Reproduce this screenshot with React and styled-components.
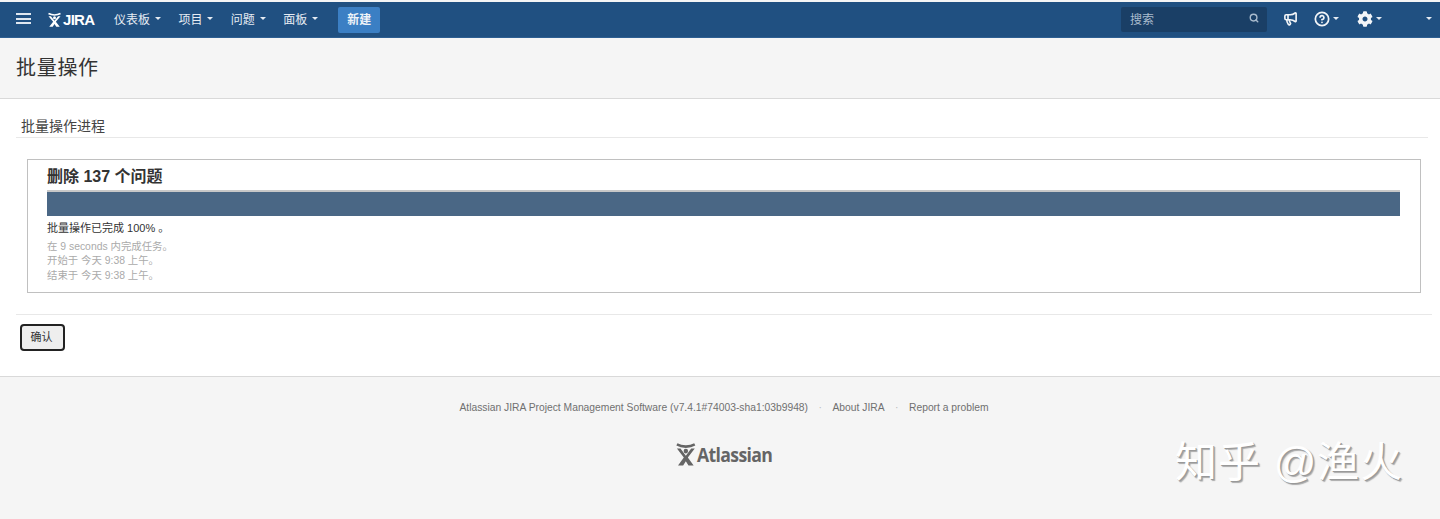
import React from "react";
import styled, { createGlobalStyle } from "styled-components";
import { Megaphone, CircleHelp, Search } from "lucide-react";
import { FaCog } from "react-icons/fa";

const Global = createGlobalStyle`
  html, body { margin: 0; padding: 0; background: #f5f5f5; }
  body { font-family: "Liberation Sans", "Noto Sans CJK SC", sans-serif; font-size: 14px; color: #333; }
`;
const Page = styled.div`position: relative; width: 1440px; height: 519px; overflow: hidden; padding-top: 2px; box-sizing: border-box; background: #f5f5f5;`;
const Nav = styled.header`height: 35px; background: #205081; border-bottom: 1px solid #2e5f92; display: flex; align-items: center; color: #f0f0f0;`;
const Burger = styled.span`width: 15px; height: 11px; margin: 0 0 2px 16px; display: flex; flex-direction: column; justify-content: space-between;
  i { display: block; height: 2px; background: #dfe7f0; }`;
const Logo = styled.span`display: flex; align-items: center; gap: 1px; margin: 0 2px 1px 16px; width: 46px; font-size: 15px; font-weight: 700; letter-spacing: -0.7px; color: #fff; svg { flex: none; }`;
const Menu = styled.nav`display: flex; margin-left: 19px; gap: 17.4px;`;
const MenuItem = styled.span`display: flex; align-items: center; font-size: 12px; padding-bottom: 2px; color: #e6ecf3; white-space: nowrap;`;
const Caret = styled.i`display: inline-block; margin-left: ${p => p.$ml ?? 5}px; width: 0; height: 0; border-left: 3px solid transparent; border-right: 3px solid transparent; border-top: 3px solid #e6ecf3;`;
const Create = styled.span`margin-left: 20px; width: 42px; height: 26px; padding-bottom: 2px; box-sizing: border-box; background: #3b7fc4; border-radius: 2px; color: #eef3f8; font-size: 12px; font-weight: 700; display: flex; align-items: center; justify-content: center;`;
const Right = styled.div`margin-left: auto; display: flex; align-items: center; height: 100%;`;
const SearchBox = styled.div`width: 146px; height: 25px; margin-bottom: 1px; background: #1a3f66; border-radius: 2px; display: flex; align-items: center; justify-content: space-between; padding: 0 8px 2px 9px; box-sizing: border-box; font-size: 12px; color: #a9bbcd;`;
const IconSlot = styled.span`display: flex; align-items: center; margin-left: ${p => p.$ml}px; margin-right: ${p => p.$mr || 0}px; padding-bottom: 2px; color: #f2f5f8;`;
const HeaderBand = styled.div`height: 60px; border-bottom: 1px solid #d9d9d9; display: flex; align-items: center; padding-left: 16px;`;
const PageTitle = styled.h1`margin: 0 0 4px; font-size: 20px; font-weight: 400; color: #333; letter-spacing: .7px;`;
const Main = styled.main`height: 278px; background: #fff; border-bottom: 1px solid #d9d9d9; padding: 0 8px 0 16px; box-sizing: border-box; display: flex; flex-direction: column;`;
const SectionTitle = styled.h2`margin: 18px 4px 0 0; padding: 0 0 1px 5px; height: 19px; font-size: 14px; line-height: 18px; font-weight: 400; color: #444; border-bottom: 1px solid #e8e8e8;`;
const ProgressBox = styled.section`margin: 21px 11px 0 11px; height: 134px; box-sizing: border-box; border: 1px solid #c0c0c0; padding: 6px 20px 0 19px;`;
const TaskTitle = styled.h3`margin: 0; font-size: 16px; line-height: 22px; height: 24px; font-weight: 700; color: #333;`;
const Bar = styled.div`background: #4a6785; border-top: 2px solid #c8c8c8; height: 24px;`;
const Status = styled.p`margin: 5px 0 5px; font-size: 11px; line-height: 14px; color: #333;`;
const Meta = styled.p`margin: 0; font-size: 10.4px; line-height: 14.4px; color: #aaa;`;
const Divider = styled.div`margin-top: 21px; border-top: 1px solid #e8e8e8;`;
const Confirm = styled.button`margin: 9px 0 0 4px; width: 45px; height: 27px; padding: 0 2px 4px 0; background: #eee; border: 2px solid #222; border-radius: 4px; font: 11px "Liberation Sans", "Noto Sans CJK SC", sans-serif; color: #333;`;
const Footer = styled.footer`display: flex; flex-direction: column; align-items: center; padding-top: 24px;`;
const FootLinks = styled.div`display: flex; font-size: 10.3px; line-height: 13px; color: #707070; margin-left: 8px; white-space: nowrap;`;
const Dot = styled.span`margin: 0 10.5px; color: #bbb;`;
const AtlLogo = styled.div`display: flex; align-items: flex-end; margin-top: 28px; margin-left: 7px; font-size: 19px; font-weight: 700; color: #656565; letter-spacing: -0.7px; line-height: 21px; font-family: "Open Sans", sans-serif; transform: scaleX(.93);`;
const Watermark = styled.div`position: absolute; left: 1175px; top: 438px; font-size: 42px; line-height: 50px; letter-spacing: 1px; color: #fff; text-shadow: 1px 1px 0 #999, 2px 2px 1px #aaa; white-space: nowrap;`;

const Mark = ({ color, size }) => (
  <svg width={size} height={size} viewBox="0 0 20 20" fill="none">
    <path d="M2 2c4.5 2.4 11.5 2.4 16 0" stroke={color} strokeWidth="2.2" />
    <circle cx="10" cy="7.6" r="2" fill={color} />
    <path d="M2 5.5l6.2 7.5L3 19.5h4.6L10 16l2.4 3.5H17L11.8 13 18 5.5h-3.2L10 11.5 5.2 5.5z" fill={color} />
  </svg>
);

export default function App() {
  return (
    <Page>
      <Global />
      <Nav>
        <Burger><i /><i /><i /></Burger>
        <Logo><Mark color="#fff" size={15} />JIRA</Logo>
        <Menu>
          {["仪表板", "项目", "问题", "面板"].map(t => <MenuItem key={t}>{t}<Caret /></MenuItem>)}
        </Menu>
        <Create>新建</Create>
        <Right>
          <SearchBox>搜索<Search size={10} strokeWidth={3.4} /></SearchBox>
          <IconSlot $ml={16}><Megaphone size={15} strokeWidth={2.6} /></IconSlot>
          <IconSlot $ml={16}><CircleHelp size={16} strokeWidth={2.6} /><Caret $ml={3} /></IconSlot>
          <IconSlot $ml={18}><FaCog size={16} /><Caret $ml={3} /></IconSlot>
          <IconSlot $ml={39} $mr={8}><Caret /></IconSlot>
        </Right>
      </Nav>
      <HeaderBand><PageTitle>批量操作</PageTitle></HeaderBand>
      <Main>
        <SectionTitle>批量操作进程</SectionTitle>
        <ProgressBox>
          <TaskTitle>删除 137 个问题</TaskTitle>
          <Bar />
          <Status>批量操作已完成 100% 。</Status>
          <Meta>在 9 seconds 内完成任务。</Meta>
          <Meta>开始于 今天 9:38 上午。</Meta>
          <Meta>结束于 今天 9:38 上午。</Meta>
        </ProgressBox>
        <Divider />
        <Confirm>确认</Confirm>
      </Main>
      <Footer>
        <FootLinks>
          <span>Atlassian JIRA Project Management Software (v7.4.1#74003-sha1:03b9948)</span>
          <Dot>·</Dot><span>About JIRA</span><Dot>·</Dot><span>Report a problem</span>
        </FootLinks>
        <AtlLogo><Mark color="#656565" size={24} />Atlassian</AtlLogo>
      </Footer>
      <Watermark>知乎 @渔火</Watermark>
    </Page>
  );
}
